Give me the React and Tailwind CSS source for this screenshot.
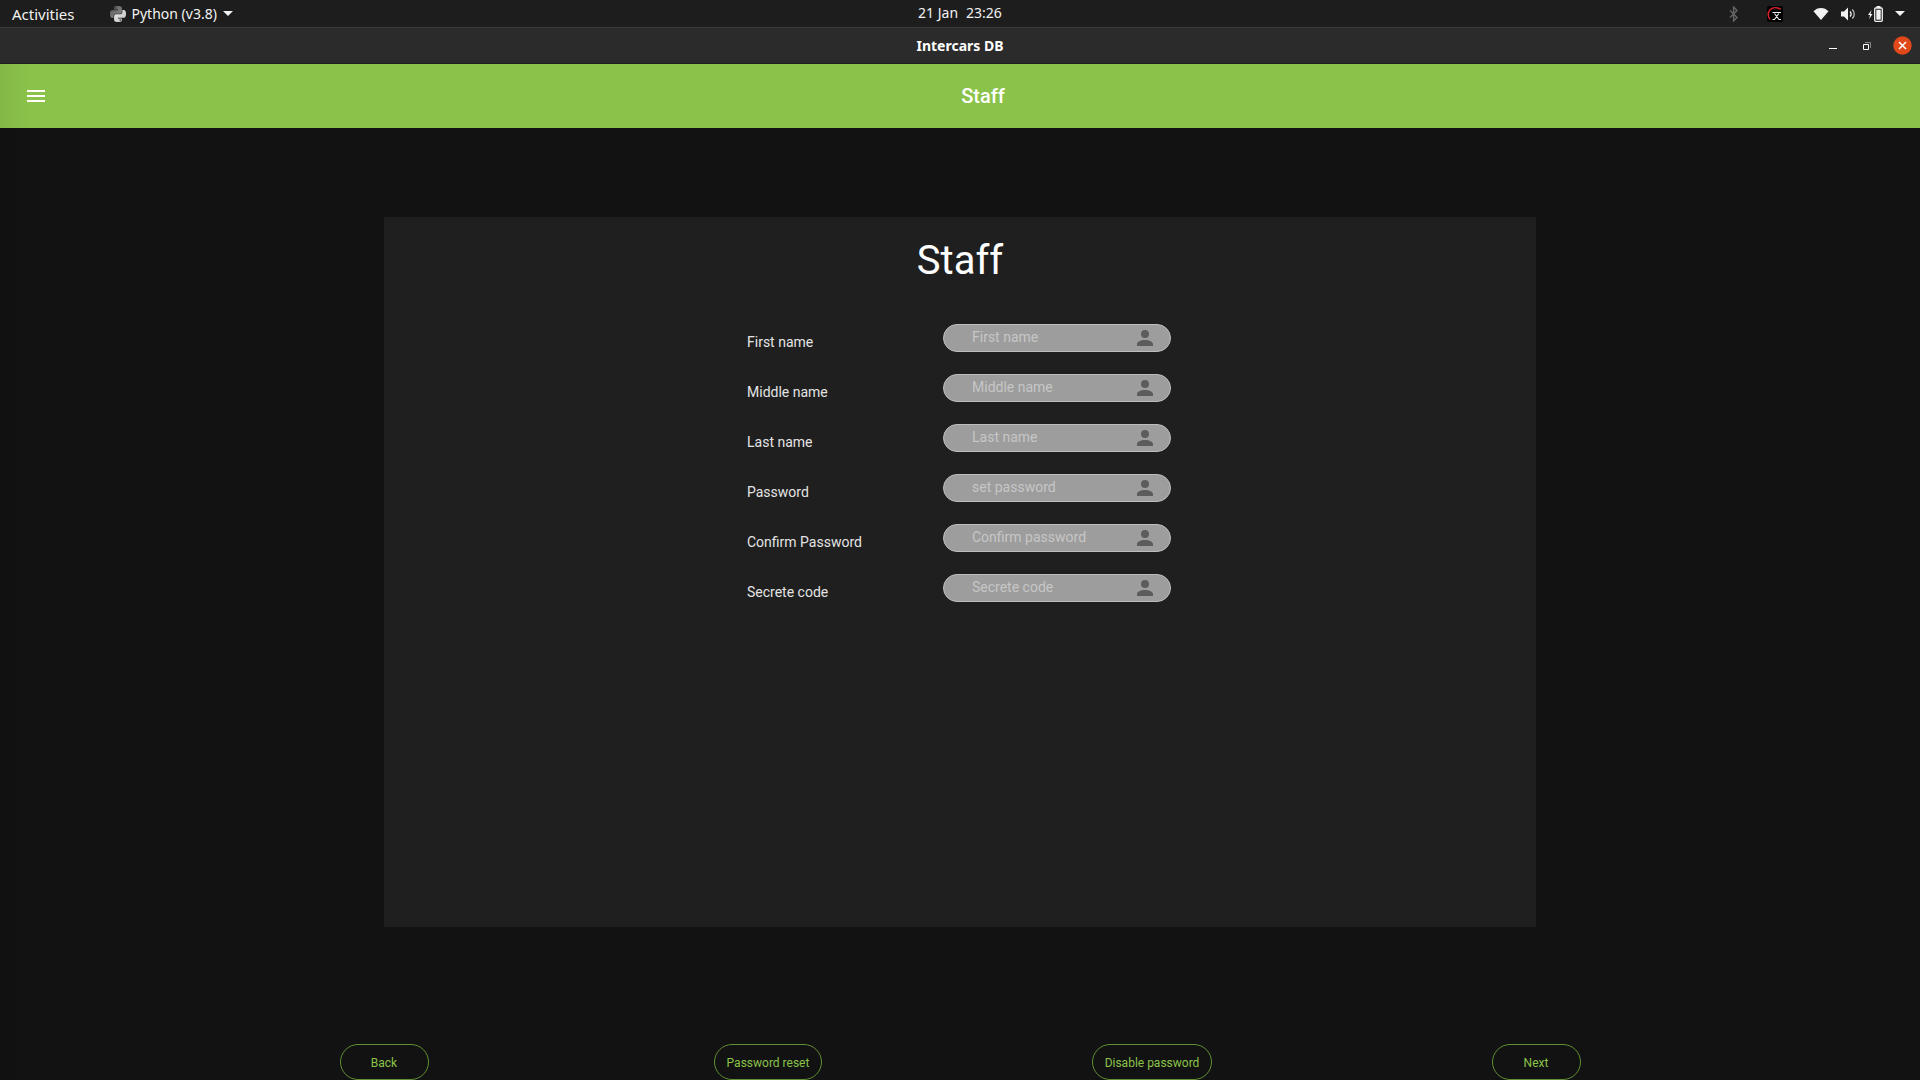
const fields = [
  { id: "first", label: "First name", hint: "First name", type: "text" },
  { id: "middle", label: "Middle name", hint: "Middle name", type: "text" },
  { id: "last", label: "Last name", hint: "Last name", type: "text" },
  { id: "password", label: "Password", hint: "set password", type: "password" },
  { id: "confirm", label: "Confirm Password", hint: "Confirm password", type: "password" },
  { id: "code", label: "Secrete code", hint: "Secrete code", type: "text" },
];

const actions = ["Back", "Password reset", "Disable password", "Next"];

function PythonLogo() {
  return (
    <svg className="size-4" viewBox="0 0 24 24" aria-hidden="true">
      <defs>
        <linearGradient id="py-dark" x1="0" y1="0" x2="1" y2="1">
          <stop offset="0" stopColor="#5a5a5a" />
          <stop offset="1" stopColor="#8c8c8c" />
        </linearGradient>
        <linearGradient id="py-light" x1="0" y1="0" x2="1" y2="1">
          <stop offset="0" stopColor="#f2f2f2" />
          <stop offset="1" stopColor="#b8b8b8" />
        </linearGradient>
      </defs>
      <path
        fill="url(#py-dark)"
        d="M14.25.18l.9.2.73.26.59.3.45.32.34.34.25.34.16.33.1.3.04.26.02.2-.01.13V8.5l-.05.63-.13.55-.21.46-.26.38-.3.31-.33.25-.35.19-.35.14-.33.1-.3.07-.26.04-.21.02H8.77l-.69.05-.59.14-.5.22-.41.27-.33.32-.27.35-.2.36-.15.37-.1.35-.07.32-.04.27-.02.21v3.06H3.17l-.21-.03-.28-.07-.32-.12-.35-.18-.36-.26-.36-.36-.35-.46-.32-.59-.28-.73-.21-.88-.14-1.05-.05-1.23.06-1.22.16-1.04.24-.87.32-.71.36-.57.4-.44.42-.33.42-.24.4-.16.36-.1.32-.05.24-.01h.16l.06.01h8.16v-.83H6.18l-.01-2.75-.02-.37.05-.34.11-.31.17-.28.25-.26.31-.23.38-.2.44-.18.51-.15.58-.12.64-.1.71-.06.77-.04.84-.02 1.27.05zm-6.3 1.98l-.23.33-.08.41.08.41.23.34.33.22.41.09.41-.09.33-.22.23-.34.08-.41-.08-.41-.23-.33-.33-.22-.41-.09-.41.09z"
      />
      <path
        fill="url(#py-light)"
        d="M21.04 6.11l.28.06.32.12.35.18.36.27.36.35.35.47.32.59.28.73.21.88.14 1.04.05 1.23-.06 1.23-.16 1.04-.24.86-.32.71-.36.57-.4.45-.42.33-.42.24-.4.16-.36.09-.32.05-.24.02-.16-.01h-8.22v.82h5.84l.01 2.76.02.36-.05.34-.11.31-.17.29-.25.25-.31.24-.38.2-.44.17-.51.15-.58.13-.64.09-.71.07-.77.04-.84.01-1.27-.04-1.07-.14-.9-.2-.73-.25-.59-.3-.45-.33-.34-.34-.25-.34-.16-.33-.1-.3-.04-.25-.02-.2.01-.13v-5.34l.05-.64.13-.54.21-.46.26-.38.3-.32.33-.24.35-.2.35-.14.33-.1.3-.06.26-.04.21-.02.13-.01h5.84l.69-.05.59-.14.5-.21.41-.28.33-.32.27-.35.2-.36.15-.36.1-.35.07-.32.04-.28.02-.21V6.07h2.09l.14.01zm-6.47 14.25l-.23.33-.08.41.08.41.23.33.33.23.41.08.41-.08.33-.23.23-.33.08-.41-.08-.41-.23-.33-.33-.23-.41-.08-.41.08z"
      />
    </svg>
  );
}

function Caret() {
  return (
    <svg className="h-[5px] w-[10px]" viewBox="0 0 10 5" aria-hidden="true">
      <path d="M0 0h10L5 5z" fill="#f2f2f2" />
    </svg>
  );
}

function Bluetooth() {
  return (
    <svg className="h-4 w-[10px]" viewBox="0 0 10 16" fill="none" stroke="#666" strokeWidth="1.4" aria-hidden="true">
      <path d="M1 4.5l7 7L4.6 15V1L8 4.5l-7 7" />
    </svg>
  );
}

function MeterIcon() {
  return (
    <svg className="size-4" viewBox="0 0 16 16" fill="none" aria-hidden="true">
      <rect width="16" height="16" rx="2" fill="#000" />
      <path d="M3 13.500C.8 10.200.8 6.200 3.300 3.600 5.900 1.100 10.200 1 13.800 3.400" stroke="#d8202a" strokeWidth="1.500" />
      <path d="M5.500 6.500h8.500M5.500 13.500h2.500M11.500 13.500H14M7.500 7.500l4.500 6M11.800 7.500l-4.300 6" stroke="#f0f0f0" strokeWidth="1.100" />
    </svg>
  );
}

function Wifi() {
  return (
    <svg className="h-3 w-4" viewBox="0 0 16 12" aria-hidden="true">
      <path d="M.5 3.300C2.500 1.200 5.100 0 8 0s5.500 1.200 7.500 3.300L8 12z" fill="#f2f2f2" />
    </svg>
  );
}

function Volume() {
  return (
    <svg className="h-[14px] w-[15px]" viewBox="0 0 15 14" fill="none" aria-hidden="true">
      <path d="M0 4.500h3L7 .5v13l-4-4H0z" fill="#f2f2f2" />
      <path d="M9 4.500c1.300 1.400 1.300 3.600 0 5" stroke="#f2f2f2" strokeWidth="1.300" />
      <path d="M11.300 2.500c2.600 2.600 2.600 6.400 0 9" stroke="#b8b8b8" strokeWidth="1.300" />
    </svg>
  );
}

function Battery() {
  return (
    <svg className="h-4 w-[15px]" viewBox="0 0 15 16" aria-hidden="true">
      <path d="M3.500 4L0 9h2l-.8 4L4.500 8h-2z" fill="#f2f2f2" />
      <path d="M8.500 0h4v2h-4z" fill="#f2f2f2" />
      <rect x="6.700" y="2" width="7.600" height="13.300" rx="1" fill="none" stroke="#f2f2f2" strokeWidth="1.300" />
      <path d="M8.300 3.700h4.400v10H8.300z" fill="#f2f2f2" />
    </svg>
  );
}

function TopBar() {
  return (
    <header className="grid h-7 grid-cols-[1fr_auto_1fr] items-center border-b border-[#3a3a3a] bg-[#1d1d1d] px-3 text-sm leading-5 text-[#f2f2f2]">
      <nav className="flex items-center gap-[35px]">
        <button type="button" className="text-[15px]">
          Activities
        </button>
        <button type="button" className="flex items-center gap-[6px]">
          <PythonLogo />
          <span>Python (v3.8)</span>
          <Caret />
        </button>
      </nav>
      <button type="button" className="flex gap-2 pb-0.5">
        <span>21 Jan</span>
        <span>23:26</span>
      </button>
      <div className="flex items-center justify-end pr-[3px]">
        <Bluetooth />
        <div className="mr-[30px] ml-7">
          <MeterIcon />
        </div>
        <button type="button" aria-label="System menu" className="flex items-center gap-3">
          <Wifi />
          <Volume />
          <Battery />
          <Caret />
        </button>
      </div>
    </header>
  );
}

function TitleBar() {
  return (
    <div className="grid h-9 grid-cols-[1fr_auto_1fr] items-center border-b border-[#1f1f1f] bg-[#2b2b2b] px-2">
      <span />
      <h1 className="text-sm leading-5 font-bold text-white">Intercars DB</h1>
      <div className="flex items-center justify-end gap-[18px]">
        <button type="button" aria-label="Minimize">
          <svg className="size-4" viewBox="0 0 16 16">
            <path d="M4 10h8v1H4z" fill="#fff" />
          </svg>
        </button>
        <button type="button" aria-label="Restore">
          <svg className="size-4" viewBox="0 0 16 16" fill="none">
            <path d="M4.500 6.500h5v5h-5z" stroke="#fff" />
            <path d="M6 4.500h5.500V10" stroke="#888" />
          </svg>
        </button>
        <button type="button" aria-label="Close">
          <svg className="size-[19px]" viewBox="0 0 19 19">
            <circle cx="9.500" cy="9.500" r="9.200" fill="#e2491a" />
            <path d="M6 6l7 7M13 6l-7 7" stroke="#fff" strokeWidth="1.500" />
          </svg>
        </button>
      </div>
    </div>
  );
}

function Field({ id, label, hint, type }) {
  return (
    <div className="flex h-7 items-center justify-between">
      <label htmlFor={id} className="pt-2 text-sm leading-5 text-[#e4e4e4]">
        {label}
      </label>
      <div className="flex h-7 w-[228px] items-center rounded-full border border-[#bdbdbd] bg-[#9d9d9d] pr-[13px] pl-7">
        <input
          id={id}
          type={type}
          placeholder={hint}
          className="min-w-0 flex-1 bg-transparent pb-0.5 text-sm leading-5 text-white outline-none placeholder:text-[#c6c6c6]"
        />
        <svg className="size-6" viewBox="0 0 24 24" fill="#5c5c5c" aria-hidden="true">
          <path d="M12 4a4 4 0 0 1 4 4 4 4 0 0 1-4 4 4 4 0 0 1-4-4 4 4 0 0 1 4-4m0 10c4.420 0 8 1.790 8 4v2H4v-2c0-2.210 3.580-4 8-4z" />
        </svg>
      </div>
    </div>
  );
}

export default function App() {
  return (
    <div className="flex min-h-screen flex-col bg-[#121212] font-['Noto_Sans',sans-serif]">
      <TopBar />
      <TitleBar />
      <div className="relative flex flex-1 flex-col font-[Roboto,sans-serif]">
        <div className="flex h-16 items-center bg-[#8bc34a] pr-3.5 pl-3">
          <button type="button" aria-label="Open menu" className="flex size-12 items-center justify-center">
            <svg className="size-6" viewBox="0 0 24 24" fill="#fff">
              <path d="M3 6h18v2H3zM3 11h18v2H3zM3 16h18v2H3z" />
            </svg>
          </button>
          <h2 className="flex-1 text-center text-xl font-medium text-white">Staff</h2>
        </div>
        <main className="flex flex-1 flex-col">
          <form className="mx-auto mt-[89px] mb-[117px] flex w-3/5 flex-1 flex-col items-center bg-[#1f1f1f] pt-5">
            <h3 className="text-[40px] leading-12 text-white">Staff</h3>
            <div className="mt-[39px] flex w-[426px] flex-col gap-[22px] pr-[2px]">
              {fields.map((field) => (
                <Field key={field.id} {...field} />
              ))}
            </div>
          </form>
          <div className="grid grid-cols-4 justify-items-center px-[10%]">
            {actions.map((action) => (
              <button
                key={action}
                type="button"
                className="h-9 min-w-[89px] rounded-full border border-[#639132] px-3 pt-0.5 text-xs leading-4 text-[#8bc34a]"
              >
                {action}
              </button>
            ))}
          </div>
        </main>
        <div className="pointer-events-none absolute inset-y-0 left-0 w-8 bg-linear-to-r from-black/6 to-transparent" />
      </div>
    </div>
  );
}
